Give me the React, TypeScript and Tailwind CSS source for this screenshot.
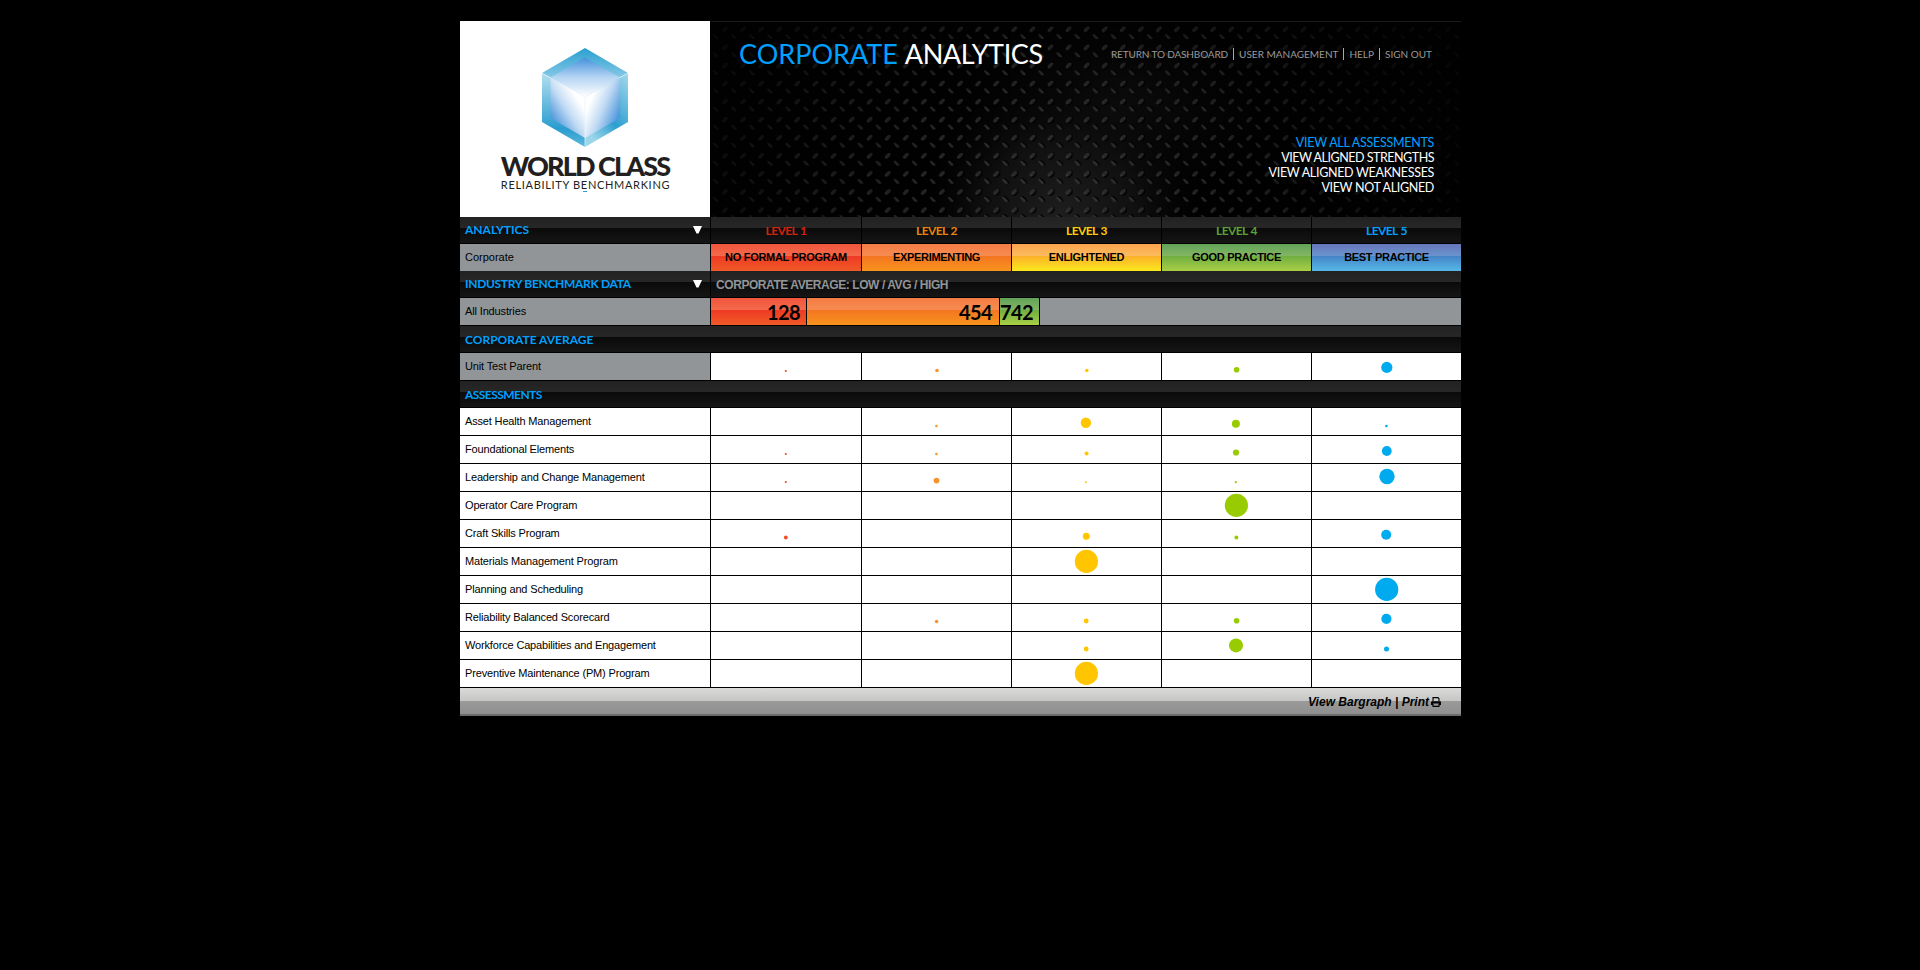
import React from "react";

type Dot = [cx: number, cy: number, d: number] | null;

const COLORS = ["#f04e23", "#f7942f", "#ffc600", "#99cc00", "#00aaee"];

const UNIT: Dot[] = [
  [74.8, 18, 1.6], [75, 17.5, 3], [74.8, 17.5, 3], [74.6, 16.7, 5], [74.8, 14.4, 11.2],
];

const ROWS: { name: string; dots: Dot[] }[] = [
  { name: "Asset Health Management", dots: [null, [74.4, 18, 2], [73.9, 14.8, 10.4], [73.9, 15.8, 8], [74.4, 18, 2]] },
  { name: "Foundational Elements", dots: [[74.8, 18, 1.6], [74.4, 18, 2], [74.6, 17.6, 3.4], [74, 16.5, 5.6], [74.8, 15, 9.8]] },
  { name: "Leadership and Change Management", dots: [[74.8, 18, 1.6], [74.5, 16.6, 5.2], [73.9, 18.2, 1.4], [73.8, 18.2, 1.6], [75, 12.5, 15.4]] },
  { name: "Operator Care Program", dots: [null, null, null, [74.4, 13.4, 23.2], null] },
  { name: "Craft Skills Program", dots: [[74.8, 17.5, 3.2], null, [74.3, 16.2, 7], [74.4, 17.5, 3.4], [74.2, 14.8, 10]] },
  { name: "Materials Management Program", dots: [null, null, [74.4, 13.4, 23.2], null, null] },
  { name: "Planning and Scheduling", dots: [null, null, null, null, [74.7, 13.4, 23.2]] },
  { name: "Reliability Balanced Scorecard", dots: [null, [74.6, 17.5, 3], [74.2, 17, 4.2], [74.6, 16.7, 5], [74.4, 14.8, 10.2]] },
  { name: "Workforce Capabilities and Engagement", dots: [null, null, [74.2, 17, 4.2], [74, 13.4, 14], [74.5, 17, 4.4]] },
  { name: "Preventive Maintenance (PM) Program", dots: [null, null, [74.4, 13.4, 23.2], null, null] },
];

const LEVELS = [
  { n: "LEVEL 1", c: "text-[#d8210a]", t: "NO FORMAL PROGRAM", g: "bg-[linear-gradient(#f0553c_0,#f46a4a_12px,#ee3a24_12px,#f05a28_27px)]" },
  { n: "LEVEL 2", c: "text-[#e8850c]", t: "EXPERIMENTING", g: "bg-[linear-gradient(#f47c46_0,#f78c50_12px,#f47521_12px,#f7941e_27px)]" },
  { n: "LEVEL 3", c: "text-[#ffcc0a]", t: "ENLIGHTENED", g: "bg-[linear-gradient(#fba450_0,#fcbc5c_12px,#fbb02a_12px,#fbe81c_27px)]" },
  { n: "LEVEL 4", c: "text-[#5ca136]", t: "GOOD PRACTICE", g: "bg-[linear-gradient(#62a45a_0,#84b662_12px,#6fae40_12px,#a9cf46_27px)]" },
  { n: "LEVEL 5", c: "text-[#00a0ff]", t: "BEST PRACTICE", g: "bg-[linear-gradient(#6676bc_0,#6a94cc_12px,#4583c6_12px,#56b8e8_27px)]" },
];

const DARK = "bg-[linear-gradient(#222_0,#272727_11px,#0a0a0a_11px,#161616_27px)]";
const HEAD = "font-[Lato,sans-serif] font-bold text-[12px] text-[#00a0ff]";
const LABEL = "flex w-[250px] items-center pl-[5px] text-[11px] text-black";

function Bubbles({ dots }: { dots: Dot[] }) {
  return (
    <>
      {dots.map((d, i) => (
        <div key={i} className={i === 0 ? "ml-px w-[150px] bg-white" : "ml-px w-[149px] bg-white"}>
          {d && (
            <svg width="149" height="27" className="block">
              <circle cx={d[0]} cy={d[1]} r={(d[2] < 6 ? d[2] + 0.6 : d[2]) / 2} fill={COLORS[i]} />
            </svg>
          )}
        </div>
      ))}
    </>
  );
}

function Plate() {
  return (
    <svg width="750" height="196" className="absolute inset-0">
      <defs>
        <pattern id="tread" width="18.08" height="18.08" patternUnits="userSpaceOnUse">
          <g transform="translate(14 8.3) rotate(-45)">
            <ellipse cx="0.6" cy="1.2" rx="4" ry="2.3" fill="#000" />
            <ellipse rx="3.5" ry="1.8" fill="#363636" />
            <ellipse cx="0.4" cy="0.3" rx="2" ry="0.8" fill="#262626" />
          </g>
          <g transform="translate(4.8 16) rotate(45)">
            <ellipse cx="0.4" cy="-1" rx="3.8" ry="1.8" fill="#000" />
            <ellipse rx="3.8" ry="1.3" fill="#323232" />
          </g>
        </pattern>
        <radialGradient id="g1" gradientUnits="userSpaceOnUse" cx="0" cy="0" r="1" gradientTransform="translate(345 170) scale(400 320)">
          <stop offset="0" stopColor="#fff" />
          <stop offset="0.45" stopColor="#b4b4b4" />
          <stop offset="0.8" stopColor="#4c4c4c" />
          <stop offset="1" stopColor="#262626" />
        </radialGradient>
        <radialGradient id="g2" gradientUnits="userSpaceOnUse" cx="0" cy="0" r="1" gradientTransform="translate(350 196) scale(150 150)">
          <stop offset="0" stopColor="#1e1e1e" />
          <stop offset="0.5" stopColor="#101010" />
          <stop offset="1" stopColor="#000" stopOpacity="0" />
        </radialGradient>
        <radialGradient id="g3" gradientUnits="userSpaceOnUse" cx="0" cy="0" r="1" gradientTransform="translate(400 90) scale(190 120)">
          <stop offset="0" stopColor="#0f0f0f" />
          <stop offset="1" stopColor="#000" stopOpacity="0" />
        </radialGradient>
        <mask id="fade"><rect width="750" height="196" fill="url(#g1)" /></mask>
      </defs>
      <rect width="750" height="196" fill="#010101" />
      <rect width="750" height="196" fill="url(#g3)" />
      <rect width="750" height="196" fill="url(#g2)" />
      <rect y="2" width="750" height="194" fill="url(#tread)" mask="url(#fade)" />
      <rect width="750" height="1" fill="#1c1c1c" />
    </svg>
  );
}

function Cube() {
  return (
    <svg width="86" height="99" viewBox="0 0 86 99" className="block">
      <defs>
        <linearGradient id="ot" x1="0" y1="0" x2="0" y2="1"><stop offset="0" stopColor="#2a9fd0" /><stop offset="0.6" stopColor="#85c8e6" /><stop offset="1" stopColor="#fff" /></linearGradient>
        <linearGradient id="ol" x1="0" y1="0" x2="0" y2="1"><stop offset="0" stopColor="#b4dff0" /><stop offset="0.75" stopColor="#2a9dcf" /><stop offset="1" stopColor="#5cb8dc" /></linearGradient>
        <linearGradient id="or" x1="1" y1="0" x2="0.4" y2="1"><stop offset="0" stopColor="#a4d8ec" /><stop offset="0.65" stopColor="#2d9fd0" /><stop offset="1" stopColor="#9ad5ea" /></linearGradient>
        <linearGradient id="it" x1="0" y1="0" x2="0" y2="1"><stop offset="0" stopColor="#4490dc" /><stop offset="0.5" stopColor="#b4d4f3" /><stop offset="1" stopColor="#fff" /></linearGradient>
        <linearGradient id="il" gradientUnits="userSpaceOnUse" x1="10" y1="72" x2="38" y2="54"><stop offset="0" stopColor="#4d96dc" /><stop offset="0.55" stopColor="#c4dcf4" /><stop offset="1" stopColor="#fff" /></linearGradient>
        <linearGradient id="ir" gradientUnits="userSpaceOnUse" x1="78" y1="66" x2="48" y2="54"><stop offset="0" stopColor="#4d96dc" /><stop offset="0.55" stopColor="#c0daf4" /><stop offset="1" stopColor="#fff" /></linearGradient>
      </defs>
      <path d="M43 0 86 25 43 49 0 25Z" fill="url(#ot)" />
      <path d="M0 25 43 49V99L0 74Z" fill="url(#ol)" />
      <path d="M86 25 43 49V99L86 74Z" fill="url(#or)" />
      <path d="M43 9.500 78 29.500 43 49 8.500 29.500Z" fill="url(#it)" />
      <path d="M8.500 29.500 43 49V90L8.500 70Z" fill="url(#il)" />
      <path d="M78 29.500 43 49V90L78 70Z" fill="url(#ir)" />
      <path d="M0 25 9 30M86 25 77 30M43 49V99" stroke="#e8f5fb" strokeWidth="0.700" />
    </svg>
  );
}

function Arrow() {
  return <svg width="9" height="8" className="mr-[8px] block"><path d="M0 0H9L5.500 7.500H3.500Z" fill="#fff" /></svg>;
}

function Printer() {
  return (
    <svg width="10" height="10" viewBox="0 0 10 10" className="block">
      <path d="M2 4.500V.6H7L8 1.800V4.500" fill="none" stroke="#000" strokeWidth="1.100" />
      <path d="M0 8V5.200Q0 4.200 1 4.200H9Q10 4.200 10 5.200V8H8V6.500H2V8Z" fill="#000" />
      <path d="M2 6.500V9.400H8V6.500" fill="none" stroke="#000" strokeWidth="1.100" />
    </svg>
  );
}

export default function App() {
  return (
    <div className="flex min-h-[970px] justify-center bg-black pt-[21px] font-['Liberation_Sans',Arial,sans-serif]">
      <div className="mr-[-1px] flex w-[1001px] flex-col">
        <header className="flex h-[196px]">
          <div className="flex w-[250px] flex-col items-center bg-white pt-[27px] font-[Lato,sans-serif] text-[#231f20]">
            <Cube />
            <div className="mt-[7px] flex text-[27px] leading-[24px] font-black whitespace-nowrap tracking-[-1.9px]">WORLD CLASS</div>
            <div className="mt-[1px] flex pl-px text-[11px] leading-[12px] whitespace-nowrap tracking-[0.68px]">RELIABILITY BENCHMARKING</div>
            <div className="h-px w-[4px] bg-[#2a9fd0]" />
          </div>
          <div className="relative ml-px flex w-[750px] flex-col justify-between font-[Lato,sans-serif] text-white">
            <Plate />
            <div className="relative flex justify-between pt-[16px] pr-[29px] pl-[28px]">
              <h1 className="flex h-[34px] items-center pt-px text-[27px] font-normal whitespace-nowrap">
                <span className="text-[#00a0ff]">CORPORATE</span>&nbsp;<span className="tracking-[-0.4px]">ANALYTICS</span>
              </h1>
              <nav className="flex h-[34px] items-center text-[10px] whitespace-nowrap text-[#999]">
                <span className="tracking-[-0.14px]">RETURN TO DASHBOARD</span>
                <span className="mx-[5px] h-[12px] w-px bg-[#aaa]" />
                <span>USER MANAGEMENT</span>
                <span className="mx-[5px] h-[12px] w-px bg-[#aaa]" />
                <span>HELP</span>
                <span className="mx-[5px] h-[12px] w-px bg-[#aaa]" />
                <span>SIGN OUT</span>
              </nav>
            </div>
            <div className="relative flex flex-col items-end pr-[27px] pb-[22px] text-[12.5px] leading-[15px]">
              <span className="tracking-[-0.28px] text-[#00a0ff]">VIEW ALL ASSESSMENTS</span>
              <span className="tracking-[-0.48px]">VIEW ALIGNED STRENGTHS</span>
              <span className="tracking-[-0.32px]">VIEW ALIGNED WEAKNESSES</span>
              <span className="tracking-[-0.33px]">VIEW NOT ALIGNED</span>
            </div>
          </div>
        </header>

        <div className="mb-px flex h-[26px]">
          <div className={`flex w-[250px] items-center justify-between pl-[5px] ${DARK} ${HEAD}`}>
            <span>ANALYTICS</span>
            <Arrow />
          </div>
          {LEVELS.map((l, i) => (
            <div key={l.n} className={`ml-px flex items-center justify-center pt-[2px] font-[Lato,sans-serif] text-[12px] font-bold tracking-[-0.6px] [word-spacing:1px] ${DARK} ${l.c} ${i === 0 ? "w-[150px]" : "w-[149px]"}`}>{l.n}</div>
          ))}
        </div>
        <div className="flex h-[27px]">
          <div className={`${LABEL} bg-[#919598]`}>Corporate</div>
          {LEVELS.map((l, i) => (
            <div key={l.n} className={`ml-px flex items-center justify-center text-[11px] font-bold tracking-[-0.3px] text-black ${l.g} ${i === 0 ? "w-[150px]" : "w-[149px]"}`}>{l.t}</div>
          ))}
        </div>
        <div className="mb-px flex h-[26px]">
          <div className={`flex w-[250px] items-center justify-between pl-[5px] ${DARK} ${HEAD}`}>
            <span className="tracking-[-0.31px]">INDUSTRY BENCHMARK DATA</span>
            <Arrow />
          </div>
          <div className={`ml-px flex flex-1 items-center pl-[5px] pt-[2px] text-[12px] font-bold tracking-[-0.43px] text-[#919598] ${DARK}`}>CORPORATE AVERAGE: LOW / AVG / HIGH</div>
        </div>
        <div className="mb-px flex h-[27px] font-[Lato,sans-serif] text-[20px] font-bold text-black">
          <div className={`${LABEL} bg-[#919598] font-['Liberation_Sans',sans-serif] font-normal tracking-[-0.14px]`}>All Industries</div>
          <div className={`ml-px flex w-[95px] items-center justify-end pr-[6px] tracking-[-0.6px] ${LEVELS[0].g}`}>128</div>
          <div className={`ml-px flex w-[192px] items-center justify-end pr-[7px] tracking-[-0.6px] ${LEVELS[1].g}`}>454</div>
          <div className={`ml-px flex w-[39px] items-center justify-end pr-[6px] tracking-[-0.6px] ${LEVELS[3].g}`}>742</div>
          <div className="ml-px flex-1 bg-[#919598]" />
        </div>
        <div className={`mb-px flex h-[26px] items-center pl-[5px] pt-[2px] ${DARK} ${HEAD}`}>CORPORATE AVERAGE</div>
        <div className="mb-px flex h-[27px]">
          <div className={`${LABEL} bg-[#919598] tracking-[-0.14px]`}>Unit Test Parent</div>
          <Bubbles dots={UNIT} />
        </div>
        <div className={`mb-px flex h-[26px] items-center pl-[5px] pt-[2px] tracking-[-0.55px] ${DARK} ${HEAD}`}>ASSESSMENTS</div>
        {ROWS.map((r) => (
          <div key={r.name} className="mb-px flex h-[27px]">
            <div className={`${LABEL} bg-white tracking-[-0.16px]`}>{r.name}</div>
            <Bubbles dots={r.dots} />
          </div>
        ))}
        <footer className="flex h-[28px] items-center justify-end bg-[linear-gradient(#dadada_0,#c6c6c4_13px,#9a9a9a_13px,#8f8f8f_26px,#6c6c6c_26px)] pr-[20px] text-[12px] font-bold italic text-black">
          <span>View Bargraph | Print</span>
          <span className="ml-[2px]"><Printer /></span>
        </footer>
      </div>
    </div>
  );
}
